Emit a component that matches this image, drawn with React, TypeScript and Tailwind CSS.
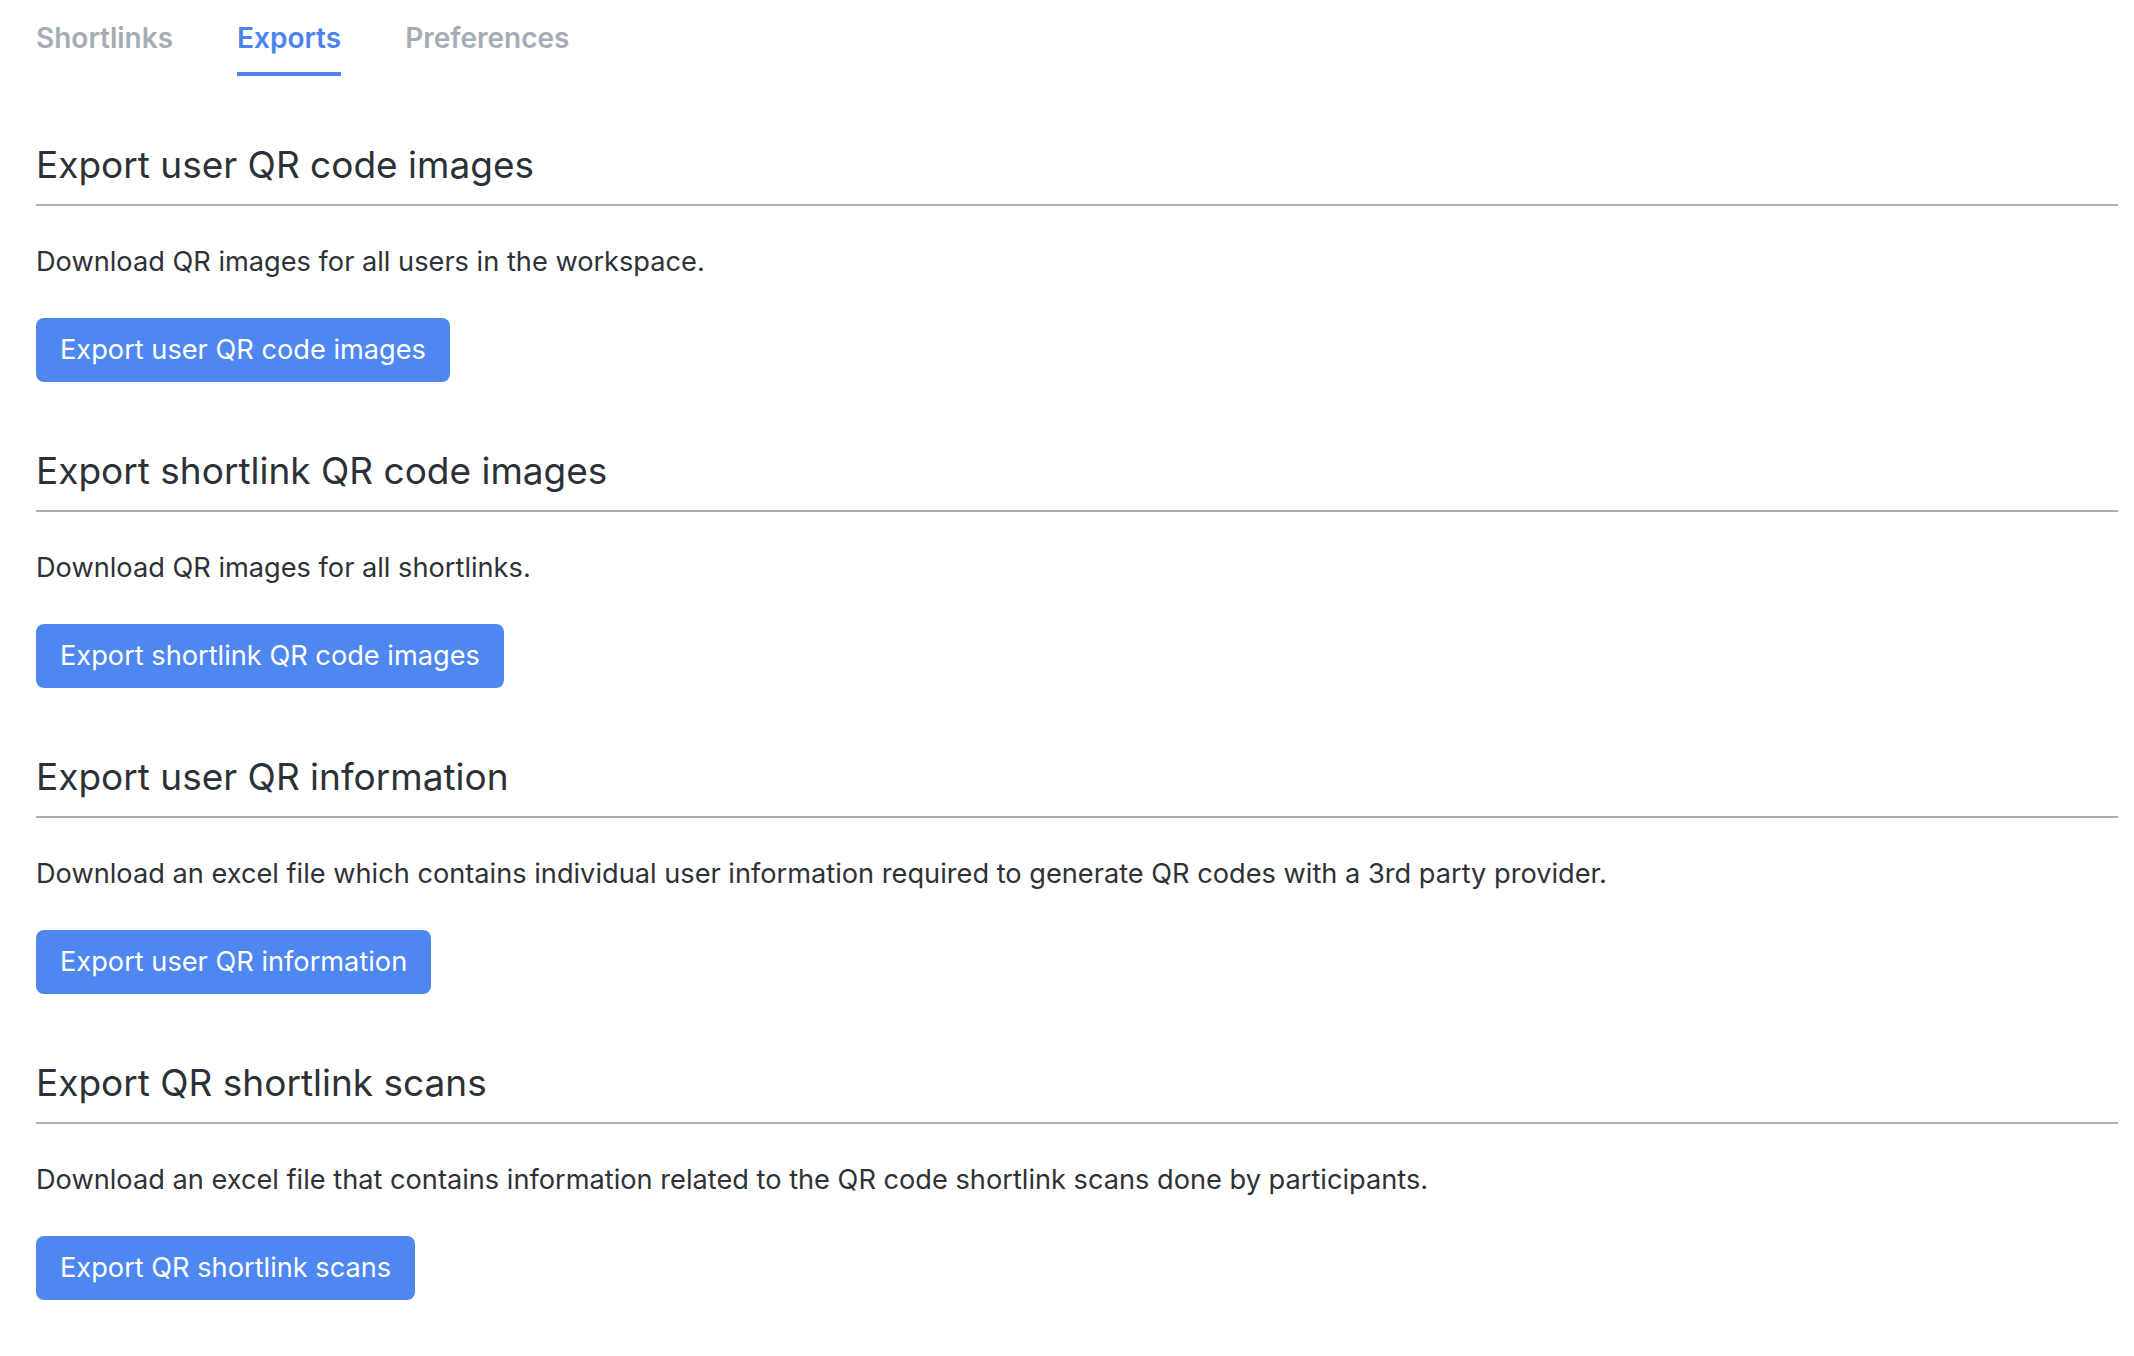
import React, { useState } from 'react';

type Section = {
  title: string;
  description: string;
};

const sections: Section[] = [
  {
    title: 'Export user QR code images',
    description: 'Download QR images for all users in the workspace.',
  },
  {
    title: 'Export shortlink QR code images',
    description: 'Download QR images for all shortlinks.',
  },
  {
    title: 'Export user QR information',
    description:
      'Download an excel file which contains individual user information required to generate QR codes with a 3rd party provider.',
  },
  {
    title: 'Export QR shortlink scans',
    description:
      'Download an excel file that contains information related to the QR code shortlink scans done by participants.',
  },
];

const tabs = ['Shortlinks', 'Exports', 'Preferences'] as const;

const App: React.FC = () => {
  const [activeTab, setActiveTab] = useState<(typeof tabs)[number]>('Exports');

  return (
    <div className="min-h-screen bg-white pl-[36px] pr-[16px] font-['Inter','Liberation_Sans',sans-serif]">
      {/* Tabs */}
      <nav className="flex gap-[64px] pt-[20px]">
        {tabs.map(tab => (
          <button
            key={tab}
            onClick={() => setActiveTab(tab)}
            className={
              tab === activeTab
                ? 'border-b-4 border-[#4b84ee] pb-[16px] text-[28px] leading-[36px] font-semibold text-[#4b84ee]'
                : 'border-b-4 border-transparent pb-[16px] text-[28px] leading-[36px] font-semibold text-[#a6acb6]'
            }
          >
            {tab}
          </button>
        ))}
      </nav>

      {/* Export sections */}
      {sections.map(section => (
        <section key={section.title} className="pt-[65px]">
          <h2 className="border-b-2 border-[#abb0ba] pb-[16px] pt-px text-[37px] leading-[46px] font-normal text-[#2c3137]">
            {section.title}
          </h2>
          <p className="pt-[36px] text-[27.2px] leading-[40px] text-[#2e3236]">{section.description}</p>
          <button className="mt-[36px] h-[64px] rounded-[8px] bg-[#4f87f0] px-[24px] text-[27.2px] leading-[40px] text-white">
            {section.title}
          </button>
        </section>
      ))}
    </div>
  );
};

export default App;
